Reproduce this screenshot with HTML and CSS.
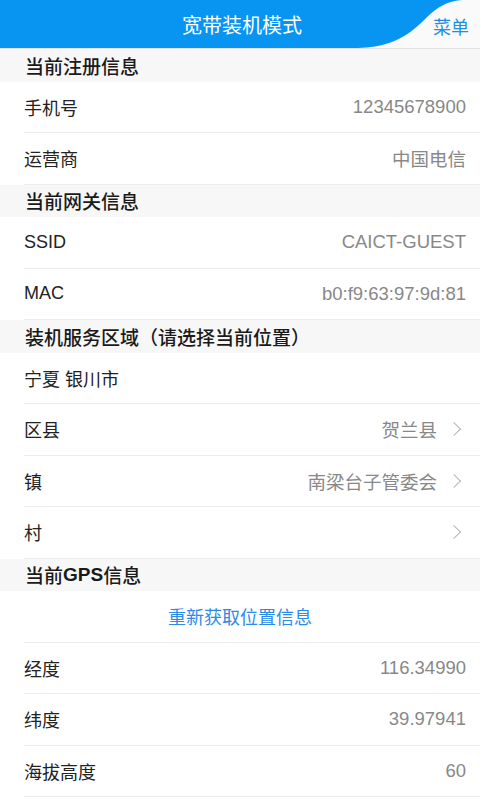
FILE: index.html
```html
<!DOCTYPE html>
<html lang="zh-CN">
<head>
  <meta charset="UTF-8">
  <title>宽带装机模式</title>
  <link rel="stylesheet" href="styles.css">
</head>
<body>
  <header class="topbar">
    <svg class="wave" viewBox="0 0 480 48" preserveAspectRatio="none">
      <path d="M358 48 C408 47 420 20 438 8 C449 1 457 0 466 0 L480 0 L480 48 Z" fill="#fafafa"/>
    </svg>
    <h1>宽带装机模式</h1>
    <span class="menu">菜单</span>
  </header>

  <div class="section">当前注册信息</div>
  <div class="row"><span class="label">手机号</span><span class="value">12345678900</span></div>
  <div class="row"><span class="label">运营商</span><span class="value">中国电信</span></div>

  <div class="section">当前网关信息</div>
  <div class="row"><span class="label">SSID</span><span class="value">CAICT-GUEST</span></div>
  <div class="row"><span class="label">MAC</span><span class="value">b0:f9:63:97:9d:81</span></div>

  <div class="section">装机服务区域（请选择当前位置）</div>
  <div class="row"><span class="label">宁夏 银川市</span></div>
  <div class="row"><span class="label">区县</span><span class="value">贺兰县</span><span class="arrow"></span></div>
  <div class="row"><span class="label">镇</span><span class="value">南梁台子管委会</span><span class="arrow"></span></div>
  <div class="row"><span class="label">村</span><span class="value"></span><span class="arrow"></span></div>

  <div class="section">当前<span class="latin">GPS</span>信息</div>
  <div class="row link-row"><span class="link">重新获取位置信息</span></div>
  <div class="row"><span class="label">经度</span><span class="value">116.34990</span></div>
  <div class="row"><span class="label">纬度</span><span class="value">39.97941</span></div>
  <div class="row"><span class="label">海拔高度</span><span class="value">60</span></div>
</body>
</html>
```

FILE: styles.css
```css
body {
  margin: 0;
  background: #fff;
  font-family: 'Liberation Sans', 'Noto Sans CJK SC', sans-serif;
  color: #222;
}
.topbar {
  position: relative;
  height: 48px;
  background: #0895f2;
  border-bottom: 1px solid #e2e2e2;
  display: flex;
  align-items: center;
  justify-content: center;
}
.wave {
  position: absolute;
  top: 0;
  left: 0;
  width: 100%;
  height: 100%;
}
.topbar h1 {
  position: relative;
  margin: 0 0 0 4px;
  font-size: 20px;
  font-weight: normal;
  color: #fff;
}
.menu {
  position: absolute;
  right: 11px;
  top: 13px;
  font-size: 18px;
  color: #1c8fe6;
}
.section {
  height: 32.5px;
  display: flex;
  align-items: center;
  padding-left: 25px;
  background: #f7f7f7;
  font-size: 19px;
  font-weight: 500;
  color: #1a1a1a;
}
.section .latin {
  font-weight: bold;
}
.row {
  height: 50.5px;
  margin-left: 24px;
  padding-right: 14px;
  border-bottom: 1px solid #ececec;
  display: flex;
  align-items: center;
}
.label {
  flex: 1;
  font-size: 18px;
}
.value {
  font-size: 18.5px;
  color: #888;
}
.arrow {
  width: 9px;
  height: 9px;
  margin: 0 7px 0 12px;
  border-top: 1.5px solid #b5b5b5;
  border-right: 1.5px solid #b5b5b5;
  transform: rotate(45deg);
}
.link-row {
  justify-content: center;
  padding-right: 24px;
}
.link {
  font-size: 18px;
  color: #2a8be8;
}
```
